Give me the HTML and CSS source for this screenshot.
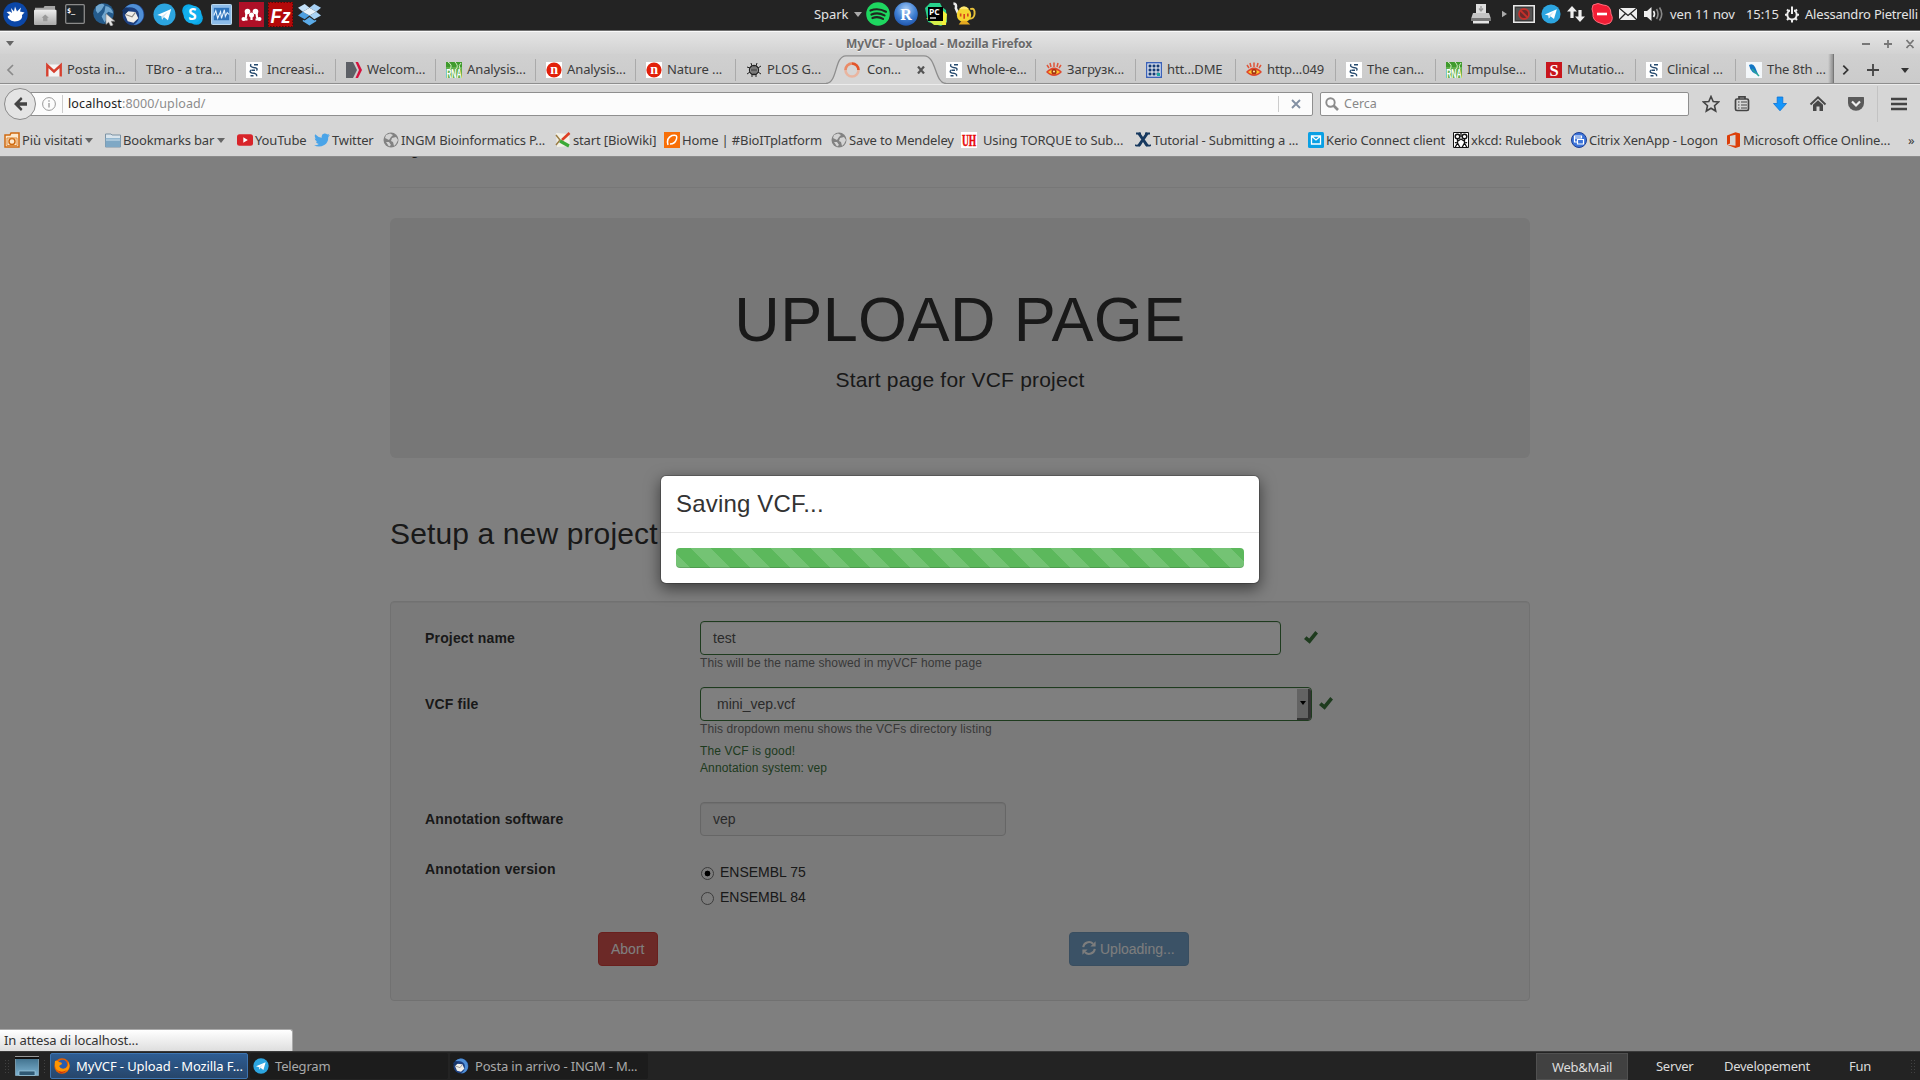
FILE: index.html
```html
<!DOCTYPE html>
<html lang="it">
<head>
<meta charset="utf-8">
<title>MyVCF - Upload</title>
<link rel="stylesheet" href="styles.css">
</head>
<body>
<svg class="defs" width="0" height="0" aria-hidden="true">
  <defs>
    <linearGradient id="gBlue" x1="0" y1="0" x2="0" y2="1"><stop offset="0" stop-color="#8fc0ee"/><stop offset="1" stop-color="#2a6fc0"/></linearGradient>
    <linearGradient id="gGrey" x1="0" y1="0" x2="0" y2="1"><stop offset="0" stop-color="#ededed"/><stop offset="1" stop-color="#a8a8a8"/></linearGradient>
    <linearGradient id="gDesk" x1="0" y1="0" x2="0" y2="1"><stop offset="0" stop-color="#3a6a86"/><stop offset="1" stop-color="#7fb4d2"/></linearGradient>
    <radialGradient id="gR" cx=".5" cy=".3" r=".7"><stop offset="0" stop-color="#a8cdf5"/><stop offset=".6" stop-color="#3f7fd2"/><stop offset="1" stop-color="#1f55ac"/></radialGradient>
  </defs>
  <symbol id="telegram" viewBox="0 0 24 24"><circle cx="12" cy="12" r="11.500" fill="#2ca5e0"/><path d="M4.500 12.500 19 6.200 15.600 18 11.300 14.600 9.400 17.400 9 13.700z" fill="#fff"/><path d="M9 13.700 15.500 9 11.300 14.600 9.400 17.400z" fill="#cfe6f5"/></symbol>
  <symbol id="thunder" viewBox="0 0 24 24"><circle cx="12" cy="12" r="11.300" fill="#1c3f80"/><path d="M3 5Q10-2 18 3 24 8 22 16 19 23 12 23 20 18 17 9 13 3 3 5z" fill="#4f8fd6"/><path d="M3 12 6 8.500 14 9.500 17 16 12 20.500 6 19z" fill="#f1efea"/><path d="M3.500 12 10.500 14.500 14 9.700" fill="none" stroke="#8d8a86" stroke-width="1.200"/><path d="M0 8Q4 2 8 7L3 12z" fill="#173567"/></symbol>
  <symbol id="helix" viewBox="0 0 16 16"><path fill="#fff" d="M0 0h16v16H0z"/><path d="M5 2.200Q3.500 5 7.500 5.500 12.500 6 10.500 8.700M12 2.700H8M5.500 7.800Q2.500 10.500 6 11 11.500 11.500 10.500 14.200M9 8.300H6M7.500 13.800H4.500" fill="none" stroke="#264a6e" stroke-width="1.400"/></symbol>
  <symbol id="eye" viewBox="0 0 16 16"><path d="M1 3 3 6M4 1 5 5M8 .5V5M12 1 11 5M15 3 13 6" stroke="#e0563a" stroke-width="1.500"/><path d="M0 10Q8 1 16 10 8 18 0 10z" fill="#e0472d"/><path d="M2 10Q8 5 14 10 8 14.500 2 10z" fill="#ffc928"/><circle cx="8" cy="9.700" r="2.600" fill="#a43213"/><circle cx="8" cy="9.500" r="1" fill="#fff3a0"/></symbol>
  <symbol id="world" viewBox="0 0 16 16"><circle cx="8" cy="8" r="7.500" fill="#828282"/><path d="M3 3 7 1.500 10 3 8 5 6 8 4 7 2 6zM9 6 13 5 15 8 13 12 11 14 10 10 8 9zM3 10 6 10 8 13 6 14.500z" fill="#d3d3d3"/></symbol>
  <symbol id="check" viewBox="0 0 14 14"><path d="M0 8 2.500 5.300 5.200 7.500 11.300 0 14 2.500 5.700 12.800z" fill="#3c763d"/></symbol>
</svg>

<div class="desktop">
  <header class="panel">
    <div class="launchers">
      <svg viewBox="0 0 25 25"><circle cx="12.500" cy="12.500" r="12.200" fill="#0b47a8"/><path d="M3.500 10 7 9.500 9 11 8 6 11 9.500 12 4.500 14 9.500 18 5.500 17 9.500 21.500 10.500 19 13Q20 17 15 19 9 20.500 6 17 3 14 7 13z" fill="#fff"/></svg>
      <svg viewBox="0 0 24 24"><path d="M1 5H10L11 3H22V10H1z" fill="#a5a5a5"/><rect y="7" width="23.500" height="16" rx="1" fill="url(#gGrey)"/><path d="M8 15.500 11.700 12 15.500 15.500H14V19H9.500V15.500z" fill="#999"/></svg>
      <svg viewBox="0 0 20 20"><rect x=".7" y=".7" width="18.600" height="18.600" rx="1" fill="#202427" stroke="#8a8a8a" stroke-width="1.300"/><text x="2" y="8.500" font-family="DejaVu Sans Mono" font-weight="bold" font-size="7" fill="#fff">$_</text></svg>
      <svg viewBox="0 0 24 24"><circle cx="11" cy="11" r="10.800" fill="#245b8c"/><path d="M3 4Q8-1 12 2L9 7 5 11 3 8zM13 3Q20 4 21 11L16 9 13 12 15 16 12 20 9 14 12 9z" fill="#70a6cf"/><path d="M13.500 11V22.500L16.300 20 18.500 24.300 21 23 19 19H23z" fill="#e4e4e4" stroke="#777" stroke-width=".6"/></svg>
      <svg><use href="#thunder"/></svg>
      <svg><use href="#telegram"/></svg>
      <svg viewBox="0 0 22 22"><circle cx="7" cy="7" r="6.800" fill="#0aa7e6"/><circle cx="15" cy="15" r="6.800" fill="#0aa7e6"/><circle cx="11" cy="11" r="9.500" fill="#12b0ef"/><text x="11" y="16.400" text-anchor="middle" font-family="Open Sans" font-weight="bold" font-size="16" fill="#fff">S</text></svg>
      <svg viewBox="0 0 22 22"><rect x=".5" y=".5" width="21" height="21" rx="1" fill="#8dbce9" stroke="#c3dff5"/><rect x="3" y="4" width="16" height="13" fill="#2f74bb"/><path d="M3 12 5 7 7 15 10 8 11 15 14 6 15 13 17 9 19 11" stroke="#e9f5ff" fill="none" stroke-width="1.100"/></svg>
      <svg viewBox="0 0 25 25"><path fill="#ae1027" d="M0 0h25v25H0z"/><circle cx="8.500" cy="9.500" r="2.800" fill="#fff"/><circle cx="16.500" cy="9.500" r="2.800" fill="#fff"/><circle cx="12.500" cy="13" r="2.500" fill="#fff"/><circle cx="4.500" cy="17" r="2" fill="#fff"/><circle cx="20.500" cy="17" r="2" fill="#fff"/><path d="M7 10Q8 14 6 17.500H8.500M18 10Q17 14 19 17.500H16.500M12.500 13V18" stroke="#fff" stroke-width="2.200" fill="none"/></svg>
      <svg viewBox="0 0 25 25"><path fill="#b30909" d="M0 0h25v25H0z"/><rect x=".5" y=".5" width="24" height="24" fill="none" stroke="#5c0505" stroke-dasharray="1.500"/><text x="2.500" y="20.500" font-family="Liberation Sans" font-weight="bold" font-style="italic" font-size="21" textLength="20" lengthAdjust="spacingAndGlyphs" fill="#fff">Fz</text></svg>
      <svg viewBox="0 0 24 24"><path d="M7 1 12 5 5 9 0 5z" fill="#c4e2fa"/><path d="M17 1 24 5 19 9 12 5z" fill="#a7d1f5"/><path d="M5 9 12 13 7 17 0 13z" fill="#4d9fe0"/><path d="M19 9 24 13 17 17 12 13z" fill="#a9d4f6"/><path d="M5 9 12 5 19 9 12 13z" fill="#e6f3fd"/><path d="M5 17.500 7 18.200 12 14.500 17 18.200 19 17.500V19L12 23.500 5 19z" fill="#5babe8"/></svg>
    </div>
    <div class="player">
      <span>Spark</span><i class="tri tri-light"></i>
      <svg viewBox="0 0 24 24"><circle cx="12" cy="12" r="11.800" fill="#1ed760"/><path d="M4.500 8.500Q12 5.500 20 9.700M5.500 12.500Q12 10 18.500 13.400M6.500 16Q12 14 17 16.900" fill="none" stroke="#20261f" stroke-width="2.200" stroke-linecap="round"/></svg>
      <svg viewBox="0 0 24 24"><circle cx="12" cy="12" r="11.800" fill="url(#gR)"/><text x="12" y="17.500" text-anchor="middle" font-family="Liberation Serif" font-weight="bold" font-size="16" fill="#fff">R</text></svg>
      <svg viewBox="0 0 24 24"><path d="M1 6 6 1 16 1 18 5 22 8 23 20 17 24 4 20z" fill="#27d18b"/><path d="M18 8 23 12 22 23 14 23z" fill="#f3f03c"/><path d="M2 16 10 23H18V18z" fill="#d6ee4a"/><path fill="#000" d="M4 5h15v14H4z"/><text x="5" y="12.500" font-family="Open Sans" font-weight="bold" font-size="8.500" fill="#fff">PC</text><path d="M6 16h6" stroke="#fff" stroke-width="1.300"/></svg>
      <svg viewBox="0 0 25 24"><path d="M1.500 1Q5 1 4 6L8 15" fill="none" stroke="#eee" stroke-width="2.600"/><path d="M19 7Q24 5 23.500 12 23 17 18 17" fill="none" stroke="#e7c13a" stroke-width="2"/><ellipse cx="12.500" cy="13" rx="7.500" ry="7.500" fill="#f6d430"/><path d="M7 7Q12.500 1 18 7z" fill="#ffe86e"/><path d="M7 23 10 19H15L19 23z" fill="#e5a91f"/><path d="M9 11.500v3M12.700 12v5M16.500 11.500v3" stroke="#d8451c" stroke-width="1.700"/></svg>
    </div>
    <div class="tray">
      <svg class="t20" viewBox="0 0 20 20"><path d="M5 0H15V9H5z" fill="#ddd"/><path d="M10 2v4M8 4.500 10 7 12 4.500" stroke="#999" fill="none" stroke-width="1.300"/><path d="M2 9H18L20 15H0z" fill="#c5c5c5"/><path d="M0 14H20V17H0z" fill="#777"/><path d="M2 17h16v2.500H2z" fill="#e5e5e5"/></svg>
      <svg class="t6" viewBox="0 0 6 8"><path d="M0 0 6 4 0 8z" fill="#aaa"/></svg>
      <svg class="t22" viewBox="0 0 22 18"><path fill="#3b3b3b" stroke="#e8e8e8" stroke-width="1.600" d="M.8.8h20.400v16.400H.8z"/><path fill="#555" d="M3 3h16v12H3z"/><circle cx="11" cy="9" r="5" fill="#6a2a2a" stroke="#c5302b" stroke-width="1.800"/><path d="M7.500 5.500 14.500 12.500" stroke="#c5302b" stroke-width="1.800"/></svg>
      <svg class="t20"><use href="#telegram"/></svg>
      <svg class="t20" viewBox="0 0 18 16"><path d="M5 0 10 5.500H6.600V12H3.400V5.500H0zM13 16 8 10.500H11.400V4H14.600V10.500H18z" fill="#eee"/></svg>
      <svg class="t22" viewBox="0 0 22 22"><path d="M2 2Q7-1 12 2 20 2 20 11 23 16 19 20 14 23 9 20 1 18 2 10 0 6 2 2z" fill="#f21d35" stroke="#ff6d7c"/><path d="M6 11h10" stroke="#fff" stroke-width="2.600"/></svg>
      <svg class="t18" viewBox="0 0 18 12"><path d="M0 0h18v12H0z" fill="#eee"/><path d="M0 0 9 7.500 18 0M0 12 6.500 5.500M18 12 11.500 5.500" fill="none" stroke="#222" stroke-width="1.300"/></svg>
      <svg class="t20" viewBox="0 0 20 16"><path d="M0 5H3L7.500 1V15L3 11H0z" fill="#eee"/><path d="M9.500 5Q11.500 8 9.500 11" fill="none" stroke="#eee" stroke-width="1.600"/><path d="M12.500 3Q15.500 8 12.500 13M15.500 1.500Q20 8 15.500 14.500" fill="none" stroke="#888" stroke-width="1.600"/></svg>
      <span class="date">ven 11 nov</span><span class="clock">15:15</span>
      <svg class="t16" viewBox="0 0 16 16"><circle cx="8" cy="8.300" r="4.700" fill="none" stroke="#eee" stroke-width="2"/><path d="M8 1V8" stroke="#232323" stroke-width="4"/><path d="M8 0V7.500M1 8.300h3M12 8.300h3M3 3 5 5M13 3 11 5M3 13.500 5 11.500M13 13.500 11 11.500M8 13v3" stroke="#eee" stroke-width="2"/></svg>
      <span class="user">Alessandro Pietrelli</span>
    </div>
  </header>

  <div class="titlebar">
    <i class="tri"></i>
    <strong>MyVCF - Upload - Mozilla Firefox</strong>
    <svg viewBox="0 0 55 10"><path d="M1 5h8M23 5h8M27 1v8M45.500 1l7 8M52.500 1l-7 8" fill="none" stroke="#777" stroke-width="1.800"/></svg>
  </div>

  <nav class="tabstrip">
    <div class="scroll-left"><svg viewBox="0 0 8 12"><path d="M7 1 2 6 7 11" fill="none" stroke="#8a8a8a" stroke-width="1.700"/></svg></div>
    <div class="tab"><svg viewBox="0 0 16 16"><path fill="#f4f4f4" d="M1 2.500h14v12H1z"/><path d="M1.300 14.500V3.300L8 9.500 14.700 3.300V14.500" fill="none" stroke="#d6402f" stroke-width="2.400"/></svg><span>Posta in...</span></div>
    <div class="tab"><span>TBro - a tra...</span></div>
    <div class="tab"><svg><use href="#helix"/></svg><span>Increasi...</span></div>
    <div class="tab"><svg viewBox="0 0 16 16"><path d="M0 0H7L11 8 7 16H0z" fill="#5d6066"/><path d="M9.500 0H12L16 8 12 16H9.500L13 8z" fill="#d5123e"/></svg><span>Welcom...</span></div>
    <div class="tab"><svg viewBox="0 0 16 16"><path fill="#5fb04a" d="M0 0h16v16H0z"/><path d="M0 0h16v5H0z" fill="#3f9a2d"/><path d="M2 0Q7 3 4 7M9 0Q13 4 10 7M15 1Q12 3 14 7" stroke="#d7efc9" fill="none"/><text x=".2" y="15.500" font-family="Liberation Sans" font-weight="bold" font-size="12" textLength="15.500" lengthAdjust="spacingAndGlyphs" fill="#fff">RNA</text></svg><span>Analysis...</span></div>
    <div class="tab"><svg viewBox="0 0 16 16"><path fill="#fff" d="M0 0h16v16H0z"/><circle cx="8" cy="8" r="7.600" fill="#e2200a"/><text x="8" y="12.200" text-anchor="middle" font-family="Liberation Serif" font-weight="bold" font-size="14" fill="#fff">n</text></svg><span>Analysis...</span></div>
    <div class="tab"><svg viewBox="0 0 16 16"><path fill="#fff" d="M0 0h16v16H0z"/><circle cx="8" cy="8" r="7.600" fill="#e2200a"/><text x="8" y="12.200" text-anchor="middle" font-family="Liberation Serif" font-weight="bold" font-size="14" fill="#fff">n</text></svg><span>Nature ...</span></div>
    <div class="tab before-active"><svg viewBox="0 0 16 16"><circle cx="8" cy="8" r="4.500" fill="#aaa" stroke="#222" stroke-width="1.300"/><path d="M5 1 6 4M11 1 10 4M1 5 4 6M15 4 12 6M1 12 4 10M15 12 12 10M6 15V12M10 15V12" stroke="#222"/><path d="M6 5v6M8 4v8M10 5v6M5 8h6" stroke="#333" stroke-width=".8"/></svg><span>PLOS G...</span></div>
    <div class="tab active">
      <svg class="tab-shape" viewBox="0 0 120 30"><path d="M0 29.500C12 29 8 2 20 1.800H98C111 2 108 29 120 29.500V30H0z" fill="#d6d6d6"/><path d="M0 29.500C12 29 8 2 20 1.800H98C111 2 108 29 120 29.500" fill="none" stroke="#8e8e8e" stroke-width="1.300"/></svg>
      <svg class="spinner" viewBox="0 0 16 16"><circle cx="8" cy="8" r="6.500" fill="none" stroke="#e9b5a0" stroke-width="2.600"/><path d="M8 1.500A6.500 6.500 0 0 1 14.500 8" fill="none" stroke="#e2552a" stroke-width="2.600"/><path d="M1.500 8A6.500 6.500 0 0 1 8 1.500" fill="none" stroke="#e98b68" stroke-width="2.600"/></svg><span>Con...</span>
      <svg class="close" viewBox="0 0 8 8"><path d="M1 .5 7 7.500M7 .5 1 7.500" stroke="#555" stroke-width="2.200"/></svg>
    </div>
    <div class="tab"><svg><use href="#helix"/></svg><span>Whole-e...</span></div>
    <div class="tab"><svg><use href="#eye"/></svg><span>Загрузк...</span></div>
    <div class="tab"><svg viewBox="0 0 16 16"><path fill="#fff" stroke="#3b62b8" stroke-width="1.400" d="M.7.7h14.600v14.600H.7z"/><path fill="#143a75" d="M2.500 2.500h11v11h-11z"/><path d="M2 6h12M2 10h12M6 2v12M10 2v12" stroke="#fff"/><path fill="#1aa6a0" d="M11 11h3v3h-3z"/></svg><span>htt...DME</span></div>
    <div class="tab"><svg><use href="#eye"/></svg><span>http...049</span></div>
    <div class="tab"><svg><use href="#helix"/></svg><span>The can...</span></div>
    <div class="tab"><svg viewBox="0 0 16 16"><path fill="#5fb04a" d="M0 0h16v16H0z"/><path d="M0 0h16v5H0z" fill="#3f9a2d"/><path d="M2 0Q7 3 4 7M9 0Q13 4 10 7M15 1Q12 3 14 7" stroke="#d7efc9" fill="none"/><text x=".2" y="15.500" font-family="Liberation Sans" font-weight="bold" font-size="12" textLength="15.500" lengthAdjust="spacingAndGlyphs" fill="#fff">RNA</text></svg><span>Impulse...</span></div>
    <div class="tab"><svg viewBox="0 0 16 16"><path fill="#c8161d" d="M0 0h16v16H0z"/><text x="8" y="13.500" text-anchor="middle" font-family="Liberation Serif" font-weight="bold" font-size="16.500" fill="#fff">S</text></svg><span>Mutatio...</span></div>
    <div class="tab"><svg><use href="#helix"/></svg><span>Clinical ...</span></div>
    <div class="tab last"><svg viewBox="0 0 16 16"><path fill="#f3f7fa" d="M0 0h16v16H0z"/><path d="M3 3Q7 1 9 5L12 12Q5 12 3 3z" fill="#1276c4"/><path d="M6 7 13 14" stroke="#2aa59b" stroke-width="1.600"/></svg><span>The 8th ...</span></div>
    <div class="tab-tools">
      <svg class="next" viewBox="0 0 8 12"><path d="M1.500 1 6.500 6 1.500 11" fill="none" stroke="#333" stroke-width="2"/></svg>
      <svg class="plus" viewBox="0 0 12 12"><path d="M6 0v12M0 6h12" stroke="#444" stroke-width="1.800"/></svg>
      <i class="tri tri-dark"></i>
    </div>
  </nav>

  <div class="navbar">
    <div class="back"><svg viewBox="0 0 14 14"><path d="M8 0 1 7 8 14 9.500 12 6.500 8.700H14V5.300H6.500L9.500 2z" fill="#444"/></svg></div>
    <div class="urlbar">
      <svg class="info" viewBox="0 0 14 14"><circle cx="7" cy="7" r="6.400" fill="none" stroke="#999"/><path d="M7 6v4.500M7 3.300v1.500" stroke="#999" stroke-width="1.300"/></svg>
      <span class="url">localhost<em>:8000/upload/</em></span>
      <div class="stop"><svg viewBox="0 0 10 10"><path d="M1 1 9 9M9 1 1 9" stroke="#8290a3" stroke-width="1.900"/></svg></div>
    </div>
    <div class="search"><svg viewBox="0 0 14 14"><circle cx="5.500" cy="5.500" r="4.200" fill="none" stroke="#8c8c8c" stroke-width="1.900"/><path d="M8.500 8.500 13 13" stroke="#8c8c8c" stroke-width="2.600"/></svg><span>Cerca</span></div>
    <div class="tools">
      <svg viewBox="0 0 18 18"><path d="M9 1.500 11.200 6.500 16.500 7 12.500 10.700 13.700 16 9 13.200 4.300 16 5.500 10.700 1.500 7 6.800 6.500z" fill="none" stroke="#444" stroke-width="1.600"/></svg>
      <svg viewBox="0 0 18 18"><rect x="2.500" y="4" width="13" height="11.500" rx="1.500" fill="none" stroke="#444" stroke-width="1.700"/><path d="M6 4V1.800H12V4" fill="none" stroke="#444" stroke-width="1.700"/><path d="M5 7h1.500M8 7h6M5 10h1.500M8 10h6M5 13h1.500M8 13h6" stroke="#444" stroke-width="1.200"/></svg>
      <svg viewBox="0 0 18 18"><path d="M6.200 2H11.800V8.500H15.500L9 15.800 2.500 8.500H6.200z" fill="#1496fb" stroke="#0a72d6" stroke-width=".8"/></svg>
      <svg viewBox="0 0 18 18"><path d="M1.500 9.500 9 2.300 16.500 9.500" fill="none" stroke="#484848" stroke-width="1.900"/><path d="M4 9.800 9 5.200 14 9.800V16H10.500V11.500H7.500V16H4z" fill="#484848"/></svg>
      <svg viewBox="0 0 18 18"><path d="M1.500 2H16.500Q17 2 17 3V8A8 7.800 0 0 1 1 8V3Q1 2 1.500 2z" fill="#5a5a5a"/><path d="M5 6.500 9 10.500 13 6.500" fill="none" stroke="#eee" stroke-width="2.200"/></svg>
      <div class="menu"><svg viewBox="0 0 18 18"><path d="M1 4h16M1 9h16M1 14h16" stroke="#444" stroke-width="2.700"/></svg></div>
    </div>
  </div>

  <div class="bookmarks">
    <a><svg viewBox="0 0 16 16"><path d="M1 3H6L7 1H15V15H1z" fill="#fde9cf" stroke="#cf6a10" stroke-width="1.500"/><circle cx="8" cy="9.500" r="3" fill="none" stroke="#cf6a10" stroke-width="1.500"/><path d="M3 6h10v7.500H3z" fill="none" stroke="#dd8a3a"/></svg>Più visitati<i class="tri"></i></a>
    <a><svg viewBox="0 0 16 16"><path d="M.5 3V2H6L7 3H15.500V15H.5z" fill="#d9e4ec" stroke="#7c92a3"/><path d="M.5 6h15v9H.5z" fill="#7fa8c5"/><path d="M1 6.500h14v2.500H1z" fill="#a9c6da"/></svg>Bookmarks bar<i class="tri"></i></a>
    <a><svg viewBox="0 0 16 16"><rect y="2.300" width="16" height="11.500" rx="2.500" fill="#d8242a"/><path d="M6.300 5.300 10.800 8 6.300 10.700z" fill="#fff"/></svg>YouTube</a>
    <a><svg viewBox="0 0 16 16"><path d="M0 13.200Q3 13.500 4.800 11.900 2.500 11.700 1.800 9.700H3.200Q.8 8.900.7 6.300L2.100 6.800Q-.1 4.800 1.200 2.300 4 5.500 7.800 5.700 7 2.200 10.300 1.500 12 1.300 13.300 2.500L15.400 1.700 14 3.600 16 3.100 14.300 4.900Q14.300 10.500 10.300 13 5 16 0 13.200z" fill="#4aa4e8"/></svg>Twitter</a>
    <a><svg><use href="#world"/></svg>INGM Bioinformatics P...</a>
    <a><svg viewBox="0 0 16 16"><path fill="#f2f0e6" d="M1 1 14 2 15 14 2 15z"/><path d="M1 3 5 8 1 13" fill="none" stroke="#9b7c45" stroke-width="1.500"/><path d="M14.500 1 7 8" stroke="#dd3f24" stroke-width="2.600"/><path d="M5 9 14 14" stroke="#3ba936" stroke-width="3.200"/></svg>start [BioWiki]</a>
    <a><svg viewBox="0 0 16 16"><path fill="#f86f08" d="M0 0h16v16H0z"/><path d="M4 13Q2 6 8 3.500 14 2 12.500 7 11 12 6 12" fill="none" stroke="#fff" stroke-width="1.500"/></svg>Home | #BioITplatform</a>
    <a><svg><use href="#world"/></svg>Save to Mendeley</a>
    <a class="wide"><svg viewBox="0 0 16 16"><path fill="#fff" d="M0 0h16v16H0z"/><text x="1" y="13.500" font-family="Liberation Serif" font-weight="bold" font-size="16" textLength="14" lengthAdjust="spacingAndGlyphs" fill="#e80a0a" stroke="#e80a0a" stroke-width=".5">UH</text></svg>Using TORQUE to Sub...</a>
    <a><svg viewBox="0 0 16 16"><path d="M3.500 1 12.500 14M12.500 1 3.500 14" stroke="#17395f" stroke-width="3"/><path d="M1 1.500H6M10 1.500H15M0 13Q4 15 6 11M16 13Q12 15 10 11" stroke="#17395f" fill="none" stroke-width="1.900"/></svg>Tutorial - Submitting a ...</a>
    <a><svg viewBox="0 0 16 16"><rect width="16" height="16" rx="1.500" fill="#0aa0e4"/><path d="M3.500 4h9v8h-9zM4 4.500 8 8 12 4.500" fill="none" stroke="#fff" stroke-width="1.300"/></svg>Kerio Connect client</a>
    <a><svg viewBox="0 0 16 16"><path fill="#fff" stroke="#111" d="M.5.5h15v15H.5z"/><circle cx="4.500" cy="4.500" r="2.300" fill="none" stroke="#111" stroke-width="1.400"/><circle cx="11.500" cy="4.500" r="2.300" fill="none" stroke="#111" stroke-width="1.400"/><path d="M4.500 7v4L2 15.500M4.500 11 7 15.500M11.500 7v4L9 15.500M11.500 11 14 15.500M2 11 8 7 14 11M8 0v5" fill="none" stroke="#111" stroke-width="1.300"/></svg>xkcd: Rulebook</a>
    <a><svg viewBox="0 0 16 16"><circle cx="8" cy="8" r="7.500" fill="#3b73d9" stroke="#1f3f93"/><path d="M3.500 4h7v2h-7zM3.500 4v6H6M6.500 7.500h6V12h-6z" fill="none" stroke="#fff" stroke-width="1.200"/></svg>Citrix XenApp - Logon</a>
    <a class="tight"><svg viewBox="0 0 16 16"><path d="M1 3.500 9.500.2 14 1.500V14.500L9.500 15.900 1 12.700 9.500 13.800V2.800L4 4.100V11.500L1 12.700z" fill="#dc3e09"/></svg>Microsoft Office Online...</a>
    <a class="more">»</a>
  </div>

  <main class="page">
    <div class="container">
      <div class="site-name"><b>myVCF</b></div>
      <hr>
      <section class="jumbotron"><h1>UPLOAD PAGE</h1><p>Start page for VCF project</p></section>
      <h2>Setup a new project</h2>
      <form class="well">
        <div class="row"><label>Project name</label><div><div class="line"><div class="control valid name">test</div><svg class="ok"><use href="#check"/></svg></div><small>This will be the name showed in myVCF home page</small></div></div>
        <div class="row file-row"><label>VCF file</label><div><div class="line"><div class="control valid select">mini_vep.vcf<span class="drop"><i></i></span></div><svg class="ok near"><use href="#check"/></svg></div><small>This dropdown menu shows the VCFs directory listing</small><small class="good">The VCF is good!<br>Annotation system: vep</small></div></div>
        <div class="row"><label>Annotation software</label><div class="control disabled">vep</div></div>
        <div class="row"><label class="version">Annotation version</label><div class="radios"><span><i class="radio on"></i>ENSEMBL 75</span><span><i class="radio"></i>ENSEMBL 84</span></div></div>
        <div class="buttons"><div class="btn danger">Abort</div><div class="btn primary"><svg viewBox="0 0 14 14"><path d="M1.200 6.200A5.800 5.800 0 0 1 11 2.800M12.800 7.800A5.800 5.800 0 0 1 3 11.200" fill="none" stroke="#fff" stroke-width="2"/><path d="M13.600.2V5.400H8.400zM.4 13.800V8.600H5.600z" fill="#fff"/></svg>Uploading...</div></div>
      </form>
    </div>
    <div class="backdrop"></div>
    <div class="modal"><h4>Saving VCF...</h4><div class="modal-body"><div class="progress"></div></div></div>
    <div class="status">In attesa di localhost...</div>
  </main>

  <footer class="taskbar">
    <i class="grip"></i>
    <svg class="show" viewBox="0 0 24 20"><path fill="url(#gDesk)" stroke="#85a9bd" stroke-width=".8" d="M.5.5h23v19H.5z"/><path fill="#111" d="M0 0h24v3H0z"/><path d="M0 .5h24" stroke="#999"/><path fill="#2e5873" stroke="#a2cbe0" stroke-width=".7" d="M4 15h16v4.500H4z"/></svg>
    <i class="grip second"></i>
    <div class="task current"><svg viewBox="0 0 16 16"><circle cx="8" cy="8" r="7.700" fill="#e66000"/><circle cx="8.500" cy="6.500" r="4.700" fill="#2a5cae"/><path d="M1 3Q3 2 5 4 8 4 8 6L5 8Q7 12 12 10 15 8 14 3 17 8 14 12 10 16 5 14 0 11 1 3z" fill="#ff9500"/><path d="M2 11Q7 16 13 12 10 16 6 15z" fill="#c93210"/></svg><span>MyVCF - Upload - Mozilla F...</span></div>
    <div class="task"><svg><use href="#telegram"/></svg><span>Telegram</span></div>
    <div class="task"><svg><use href="#thunder"/></svg><span>Posta in arrivo - INGM - M...</span></div>
    <div class="workspaces"><span class="ws on">Web&amp;Mail</span><span>Server</span><span>Developement</span><span>Fun</span></div>
    <i class="grip"></i>
  </footer>
</div>
</body>
</html>
```
FILE: styles.css
```css
* { box-sizing: border-box; }
body { margin: 0; font: 13px/18px "Noto Sans", sans-serif; color: #3c3c3c; }
svg { display: block; flex: none; }
.defs { position: absolute; }
.desktop { width: 1920px; height: 1080px; display: flex; flex-direction: column; overflow: hidden; background: #d6d6d6; white-space: nowrap; letter-spacing: -.1px; }
.tri { display: block; flex: none; width: 0; height: 0; border: 4px solid transparent; border-top: 5px solid #666; border-bottom: 0; }
.tri-light { border-top-color: #aaa; }
.tri-dark { border-top-color: #333; }

/* top desktop panel */
.panel { height: 31px; flex: none; display: grid; grid-template-columns: 814px 657px 1fr; background: #232323; border-bottom: 1px solid #6f6f6f; color: #e4e4e4; padding-bottom: 2px; }
.launchers { display: grid; grid-template-columns: 31px 31px 28px 29px 31px 29px 29px 28px 29px 30px 24px; padding-left: 3px; align-items: center; }
.launchers svg { width: 23px; height: 23px; }
.launchers svg:nth-child(1), .launchers svg:nth-child(9), .launchers svg:nth-child(10) { width: 25px; height: 25px; }
.launchers svg:nth-child(3) { width: 20px; height: 20px; }
.launchers svg:nth-child(7), .launchers svg:nth-child(8) { width: 21px; height: 21px; }
.player { display: grid; grid-template-columns: 40px 12px 28px 30px 28px 25px; align-items: center; }
.player svg { width: 24px; height: 24px; }
.tray { display: flex; align-items: center; }
.tray .t6 { width: 5px; height: 8px; margin: 0 6px 0 11px; }
.tray .t20 { width: 20px; height: 20px; }
.tray .t22 { width: 22px; height: 22px; }
.tray .t22 + .t20 { margin: 0 6px; }
.tray .t20 + .t20 { width: 18px; height: 18px; }
.tray .t20 + .t22 { margin: 0 6px; }
.tray .t18 { width: 18px; height: 12px; }
.tray .t18 + .t20 { height: 16px; margin: 0 6px 0 7px; }
.tray .date { width: 76px; }
.tray .clock { width: 38px; }
.tray .t16 { width: 16px; height: 17px; margin-right: 5px; }
.tray .user { letter-spacing: -.2px; }

/* browser window chrome */
.titlebar { height: 23px; flex: none; display: grid; grid-template-columns: 1fr auto 1fr; align-items: center; padding: 1px 4px 0 6px; background: linear-gradient(#e4e4e4, #d2d2d2); border-top: 1px solid #fafafa; }
.titlebar strong { font-size: 12px; color: #6a6a6a; text-shadow: 0 1px #f2f2f2; margin-right: 44px; letter-spacing: -.12px; }
.titlebar svg { width: 55px; height: 10px; justify-self: end; }
.tabstrip { height: 30px; flex: none; display: flex; background: linear-gradient(#d0d0d0, #cbcbcb 28px, #c8c8c8 29px, #8e8e8e 29px); }
.scroll-left { width: 36px; padding: 10px 0 0 6px; }
.scroll-left svg { width: 8px; height: 12px; }
.tab { width: 100px; flex: none; height: 22px; margin-top: 5px; display: flex; align-items: center; gap: 5px; padding-left: 10px; border-right: 1px solid #aaa; }
.tab svg { width: 16px; height: 16px; }
.tab span { margin-top: -2px; }
.before-active, .tab.active { border-right-color: transparent; }
.tab.active { position: relative; padding-left: 8px; }
.tab.active span { width: 45px; margin-left: 2px; }
.tab .spinner, .tab.active span, .tab .close { position: relative; }
.tab .tab-shape { position: absolute; left: -10px; top: -5px; width: 120px; height: 30px; }
.tab .close { width: 8px; height: 8px; }
.tab.last { width: 98px; height: 29px; margin-top: 0; padding-top: 3px; border-right: 1px solid #777; background: linear-gradient(90deg, transparent 92px, rgba(0,0,0,.3)); }
.tab-tools { display: flex; align-items: center; padding: 2px 0 0 8px; }
.tab-tools .next { width: 7px; height: 12px; margin-right: 18px; }
.tab-tools .plus { width: 12px; height: 12px; margin-right: 22px; }
.navbar { height: 40px; flex: none; display: flex; align-items: center; background: linear-gradient(#ececec 1px, #d6d6d6 1px); padding-left: 4px; }
.back { width: 32px; height: 32px; flex: none; border: 1px solid #8b8b8b; border-radius: 50%; background: #e4e4e4; display: grid; place-items: center; z-index: 1; }
.back svg { width: 14px; height: 14px; }
.urlbar { width: 1284px; height: 24px; margin-left: -7px; border: 1px solid #8f8f8f; border-radius: 2px; background: #fcfcfc; display: flex; align-items: center; }
.info { width: 14px; height: 14px; margin: 0 6px 0 12px; }
.url { border-left: 1px solid #ccc; padding-left: 5px; color: #222; font-size: 12.500px; letter-spacing: .12px; flex: 1; }
.url em { font-style: normal; color: #8c8c8c; }
.stop { width: 34px; height: 16px; border-left: 1px solid #ccc; display: grid; place-items: center; }
.stop svg { width: 10px; height: 10px; }
.search { width: 369px; height: 24px; margin-left: 7px; border: 1px solid #8f8f8f; border-radius: 2px; background: #fcfcfc; display: flex; align-items: center; gap: 5px; padding-left: 4px; color: #888; font-size: 12.500px; letter-spacing: 0; }
.search svg { width: 14px; height: 14px; }
.tools { display: grid; grid-template-columns: 31px 38px 38px 38px 30px 31px; padding-left: 13px; align-items: center; }
.tools svg { width: 18px; height: 18px; }
.menu { height: 36px; display: grid; align-items: center; padding-left: 12px; border-left: 1px solid #c3c3c3; }
.bookmarks { height: 33px; flex: none; display: grid; grid-template-columns: 101px 132px 77px 69px 172px 109px 167px 130px 174px 173px 145px 118px 155px 182px 12px; padding-left: 4px; align-items: center; border-bottom: 1px solid #8b8b8b; letter-spacing: -.15px; }
.bookmarks a { display: flex; align-items: center; gap: 2px; }
.bookmarks svg { width: 16px; height: 16px; }
.bookmarks .tri { margin-left: 1px; }
.bookmarks .wide { gap: 6px; }
.bookmarks .tight { gap: 1px; }

/* web page */
.page { position: relative; flex: 1; background: #fff; overflow: hidden; font: 14px/20px "Liberation Sans", Arial, sans-serif; letter-spacing: 0; color: #333; }
.container { width: 1140px; margin: 0 auto; }
.site-name { height: 52px; margin-top: -22px; font-size: 24px; line-height: 20px; }
hr { margin: 0; border: 0; border-top: 1px solid #eee; }
.jumbotron { height: 240px; margin-top: 30px; padding-top: 67px; background: #eee; border-radius: 6px; text-align: center; }
.jumbotron h1 { margin: 0 0 11px; font-size: 63px; line-height: 69px; font-weight: 400; letter-spacing: .4px; }
.jumbotron p { margin: 0; font-size: 21px; line-height: 30px; letter-spacing: .2px; }
h2 { margin: 59px 0 51px; font-size: 30px; line-height: 33px; font-weight: 400; letter-spacing: .13px; }
.well { height: 400px; border: 1px solid #e3e3e3; border-radius: 4px; background: #f5f5f5; box-shadow: inset 0 1px 1px rgba(0,0,0,.05); padding: 19px 0 0 34px; }
.row { display: grid; grid-template-columns: 275px auto; justify-content: start; margin-bottom: 15px; }
.row label { font-weight: 700; padding-top: 7px; letter-spacing: .17px; }
.row .version { padding-top: 8px; }
.line { display: flex; align-items: center; }
.control { height: 34px; border: 1px solid #ccc; border-radius: 4px; padding: 6px 12px; background: #fff; color: #555; box-shadow: inset 0 1px 1px rgba(0,0,0,.075); }
.valid { border-color: #3c763d; }
.name { width: 581px; }
.select { width: 612px; padding: 0 0 0 16px; display: flex; justify-content: space-between; align-items: center; }
.drop { width: 14px; height: 31px; background: #c6c6c6; border: solid #666; border-width: 0 3px 2px 0; display: grid; place-items: center; border-radius: 0 2px 3px 0; }
.drop i { border: 3px solid transparent; border-top: 4px solid #000; border-bottom: 0; }
.ok { width: 14px; height: 14px; margin-left: 23px; }
.near { margin-left: 7px; }
small { display: block; font-size: 12px; line-height: 17px; color: #737373; letter-spacing: .11px; }
.good { color: #3c763d; margin-top: 5px; }
.file-row { margin-bottom: 25px; }
.disabled { width: 306px; background: #eee; }
.radios { padding-top: 11px; display: grid; gap: 5px; }
.radios span { display: flex; align-items: center; gap: 6px; }
.radio { width: 13px; height: 13px; margin: 2px 0 0 1px; border: 1px solid #777; border-radius: 50%; background: #f8f8f8; }
.radio.on { background: radial-gradient(#000 2.600px, #f8f8f8 3.200px); }
.buttons { display: flex; gap: 411px; padding: 10px 0 0 173px; }
.btn { height: 34px; border: 1px solid; border-radius: 4px; padding: 6px 12px; color: #fff; display: flex; gap: 4px; }
.danger { background: #d9534f; border-color: #d43f3a; width: 60px; }
.primary { background: #337ab7; border-color: #2e6da4; opacity: .65; width: 120px; }
.primary svg { width: 14px; height: 14px; margin-top: 2px; }
.backdrop { position: absolute; inset: 0; background: rgba(0,0,0,.5); }
.modal { position: absolute; left: 660px; top: 318px; width: 600px; height: 109px; background: #fff; border: 1px solid rgba(0,0,0,.2); border-radius: 6px; background-clip: padding-box; box-shadow: 0 5px 15px rgba(0,0,0,.5); }
.modal h4 { margin: 0; height: 57px; padding: 15px; font-size: 24px; line-height: 26px; font-weight: 400; letter-spacing: .18px; border-bottom: 1px solid #e5e5e5; }
.modal-body { padding: 15px; }
.progress { height: 20px; border-radius: 4px; background: linear-gradient(45deg, rgba(255,255,255,.15) 25%, transparent 25%, transparent 50%, rgba(255,255,255,.15) 50%, rgba(255,255,255,.15) 75%, transparent 75%) 15px 0 / 40px 40px #5cb85c; box-shadow: inset 0 -1px 0 rgba(0,0,0,.15); }
.status { position: absolute; left: 0; bottom: 0; width: 293px; height: 22px; padding: 1px 4px; border: solid #aaa; border-width: 1px 1px 0 0; border-radius: 0 3px 0 0; background: linear-gradient(#fff, #dedede); font: 13px/18px "Noto Sans", sans-serif; letter-spacing: -.1px; color: #333; }

/* bottom desktop panel */
.taskbar { height: 29px; flex: none; display: flex; align-items: center; background: #232323; border-top: 1px solid #3a3a3a; padding: 0 4px; color: #a9a9a9; }
.grip { width: 6px; height: 15px; flex: none; background: radial-gradient(#555 .8px, transparent 1px) 0 0 / 3px 3px; opacity: .6; }
.grip.second { width: 4px; margin: 0 3px 0 4px; }
.show { width: 24px; height: 20px; margin-left: 5px; }
.task { width: 198px; height: 26px; margin-right: 2px; display: flex; align-items: center; gap: 6px; padding-left: 3px; background: #1c1c1c; border-radius: 2px; letter-spacing: -.18px; }
.task svg { width: 16px; height: 16px; }
.task.current { background: linear-gradient(#2d5c92, #27466b); border: 1px solid #3d74b0; color: #fff; letter-spacing: -.1px; }
.workspaces { margin-left: auto; margin-right: 39px; display: grid; grid-template-columns: 120px 68px 125px 22px; align-items: center; color: #dcdcdc; letter-spacing: -.28px; }
.ws.on { width: 92px; height: 27px; line-height: 26px; text-align: center; background: #414141; border: 1px solid #505050; }
```
